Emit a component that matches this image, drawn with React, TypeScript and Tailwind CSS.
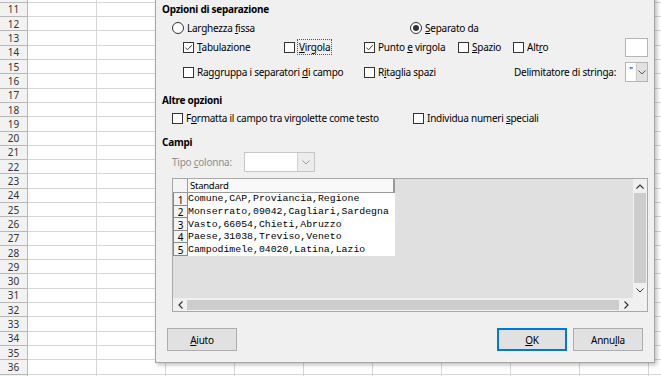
import React from "react";

function Check({ checked = false }: { checked?: boolean }) {
  return (
    <span className="w-[11px] h-[11px] border border-[#333333] bg-white flex items-center justify-center shrink-0">
      {checked && (
        <svg width="9" height="9" viewBox="0 0 9 9">
          <path d="M1.3 4.6 L3.5 6.8 L7.8 2.2" stroke="#333333" strokeWidth="1" fill="none" />
        </svg>
      )}
    </span>
  );
}

function Radio({ on = false }: { on?: boolean }) {
  return (
    <span className="w-[12px] h-[12px] rounded-full border border-[#333333] bg-white flex items-center justify-center shrink-0">
      {on && <span className="w-[6px] h-[6px] rounded-full bg-[#333333]" />}
    </span>
  );
}

function Chevron({ color = "#555555" }: { color?: string }) {
  return (
    <svg width="8" height="5" viewBox="0 0 8 5">
      <path d="M0.5 0.5 L4 4 L7.5 0.5" stroke={color} strokeWidth="1" fill="none" />
    </svg>
  );
}

const U = ({ children }: { children: React.ReactNode }) => <span className="underline underline-offset-[1px]">{children}</span>;

function SheetRow({ n, cls }: { n?: number; cls: string }) {
  const cols = [0, 1, 2, 3, 4, 5, 6, 7, 8, 9];
  return (
    <div className={`flex shrink-0 ${cls}`}>
      <div className="w-[28px] shrink-0 bg-[#f2f2f2] border-r border-b border-[#b8b8b8] flex items-center justify-center text-[10px] text-[#333333] leading-none overflow-hidden">
        {n}
      </div>
      {cols.map((c) => (
        <div key={c} className="w-[69px] shrink-0 border-r border-b border-[#d6d6d6]" />
      ))}
    </div>
  );
}

export default function App() {
  const nums = [] as number[];
  for (let i = 11; i <= 36; i++) nums.push(i);
  const data = [
    "Comune,CAP,Proviancia,Regione",
    "Monserrato,09042,Cagliari,Sardegna",
    "Vasto,66054,Chieti,Abruzzo",
    "Paese,31038,Treviso,Veneto",
    "Campodimele,04020,Latina,Lazio",
  ];
  return (
    <div className="relative w-[661px] h-[376px] overflow-hidden bg-white font-['Noto_Sans',sans-serif] text-black">
      {/* spreadsheet */}
      <div className="flex flex-col">
        <SheetRow cls="h-[2.85px]" />
        {nums.map((n) => (
          <SheetRow key={n} n={n} cls="h-[14.3px]" />
        ))}
        <SheetRow cls="h-[14.3px]" />
      </div>

      {/* dialog */}
      <div className="absolute left-[155px] top-[-20px] w-[500px] h-[383px] bg-[#f0f0f0] border border-[#a6a6a6] shadow-[2px_2px_4px_rgba(0,0,0,0.25)] flex flex-col pt-[19px] text-[10px] tracking-[-0.25px] leading-none">
        <div className="h-[18px] pl-[6px] flex items-center font-bold">Opzioni di separazione</div>

        <div className="h-[18px] mt-[1px] pl-[16px] flex items-center">
          <div className="w-[238px] flex items-center gap-[3px]">
            <Radio />
            <span>Larghezza <U>f</U>issa</span>
          </div>
          <div className="flex items-center gap-[3px]">
            <Radio on />
            <span><U>S</U>eparato da</span>
          </div>
        </div>

        <div className="h-[20px] pl-[27px] flex items-center pr-[6px]">
          <div className="w-[101px] flex items-center gap-[3px]">
            <Check checked />
            <span><U>T</U>abulazione</span>
          </div>
          <div className="w-[80px] flex items-center gap-[2px]">
            <Check />
            <span className="border border-dotted border-[#555555] px-[1px] py-[2px]"><U>V</U>irgola</span>
          </div>
          <div className="w-[94px] flex items-center gap-[3px]">
            <Check checked />
            <span>Punto <U>e</U> virgola</span>
          </div>
          <div className="w-[55px] flex items-center gap-[3px]">
            <Check />
            <span><U>S</U>pazio</span>
          </div>
          <div className="flex-1 flex items-center gap-[3px]">
            <Check />
            <span>Alt<U>r</U>o</span>
          </div>
          <div className="w-[23px] h-[19px] bg-white border border-[#b5b5b5]" />
        </div>

        <div className="h-[20px] mt-[5px] pl-[27px] flex items-center pr-[6px]">
          <div className="w-[181px] flex items-center gap-[3px]">
            <Check />
            <span>Raggruppa i separatori <U>d</U>i campo</span>
          </div>
          <div className="w-[150px] flex items-center gap-[3px]">
            <Check />
            <span>R<U>i</U>taglia spazi</span>
          </div>
          <div className="flex-1">Delimitatore di stringa:</div>
          <div className="w-[23px] h-[20px] bg-white border border-[#b5b5b5] flex">
            <div className="w-[10px] flex items-start justify-center pt-[3px] text-[9px]">"</div>
            <div className="flex-1 bg-[#e1e1e1] border-l border-[#c8c8c8] flex items-center justify-center">
              <Chevron />
            </div>
          </div>
        </div>

        <div className="h-[18px] mt-[9px] pl-[6px] flex items-center font-bold">Altre opzioni</div>

        <div className="h-[18px] pl-[16px] flex items-center">
          <div className="w-[241px] flex items-center gap-[3px]">
            <Check />
            <span>F<U>o</U>rmatta il campo tra virgolette come testo</span>
          </div>
          <div className="flex items-center gap-[3px]">
            <Check />
            <span>Individua numeri <U>s</U>peciali</span>
          </div>
        </div>

        <div className="h-[18px] mt-[6px] pl-[6px] flex items-center font-bold">Campi</div>

        <div className="h-[20px] mt-[1px] pl-[16px] flex items-center">
          <div className="w-[72px] text-[#8f8f8f]">Tipo <U>c</U>olonna:</div>
          <div className="w-[71px] h-[20px] bg-white border border-[#c6c6c6] flex">
            <div className="flex-1" />
            <div className="w-[17px] bg-[#ececec] border-l border-[#d0d0d0] flex items-center justify-center">
              <Chevron color="#9a9a9a" />
            </div>
          </div>
        </div>

        {/* table */}
        <div className="ml-[16px] mt-[6px] w-[476px] h-[134px] border border-[#a8a8a8] flex flex-col">
          <div className="flex h-[119px]">
            <div className="w-[460px] bg-[#e0e0e0] flex flex-col">
              <div className="flex h-[14px]">
                <div className="w-[15px] bg-[#f4f4f4] border-r border-b border-[#9a9a9a]" />
                <div className="w-[207px] bg-[#f9f9f9] border-r-2 border-b border-[#9a9a9a] flex items-center pl-[2px] text-[9.5px]">
                  Standard
                </div>
              </div>
              {data.map((d, i) => (
                <div key={i} className="flex h-[12.6px]">
                  <div className="w-[15px] bg-[#f4f4f4] border-r border-b border-l border-[#8a8a8a] flex items-end justify-center text-[10px] leading-none">
                    {i + 1}
                  </div>
                  <div className="w-[207px] bg-white flex items-center font-['Liberation_Mono',monospace] text-[9.85px] tracking-normal leading-none whitespace-nowrap overflow-hidden">
                    {d}
                  </div>
                </div>
              ))}
            </div>
            <div className="w-[14px] bg-[#f0f0f0] flex flex-col">
              <div className="h-[14px] flex items-center justify-center">
                <svg width="8" height="5" viewBox="0 0 8 5">
                  <path d="M0.5 4.5 L4 1 L7.5 4.5" stroke="#333333" strokeWidth="1.2" fill="none" />
                </svg>
              </div>
              <div className="h-[90px] mx-[1px] bg-[#cdcdcd]" />
              <div className="flex-1 flex items-center justify-center">
                <Chevron color="#333333" />
              </div>
            </div>
          </div>
          <div className="flex h-[13px] border-t border-[#f0f0f0]">
            <div className="w-[14px] bg-[#f0f0f0] flex items-center justify-center">
              <svg width="5" height="8" viewBox="0 0 5 8">
                <path d="M4.5 0.5 L1 4 L4.5 7.5" stroke="#333333" strokeWidth="1.2" fill="none" />
              </svg>
            </div>
            <div className="w-[432px] bg-[#cdcdcd] my-[1px]" />
            <div className="w-[14px] bg-[#f0f0f0] flex items-center justify-center">
              <svg width="5" height="8" viewBox="0 0 5 8">
                <path d="M0.5 0.5 L4 4 L0.5 7.5" stroke="#333333" strokeWidth="1.2" fill="none" />
              </svg>
            </div>
            <div className="flex-1 bg-[#f0f0f0]" />
          </div>
        </div>

        {/* buttons */}
        <div className="h-[23px] mt-[16px] flex px-[11px]">
          <div className="w-[70px] h-[23px] bg-[#e1e1e1] border border-[#adadad] flex items-center justify-center">
            <span><U>A</U>iuto</span>
          </div>
          <div className="ml-auto w-[70px] h-[23px] bg-[#e1e1e1] border-2 border-[#0078d7] flex items-center justify-center">
            <span><U>O</U>K</span>
          </div>
          <div className="ml-[6px] w-[70px] h-[23px] bg-[#e1e1e1] border border-[#adadad] flex items-center justify-center">
            <span>Annu<U>l</U>la</span>
          </div>
        </div>
      </div>
    </div>
  );
}
